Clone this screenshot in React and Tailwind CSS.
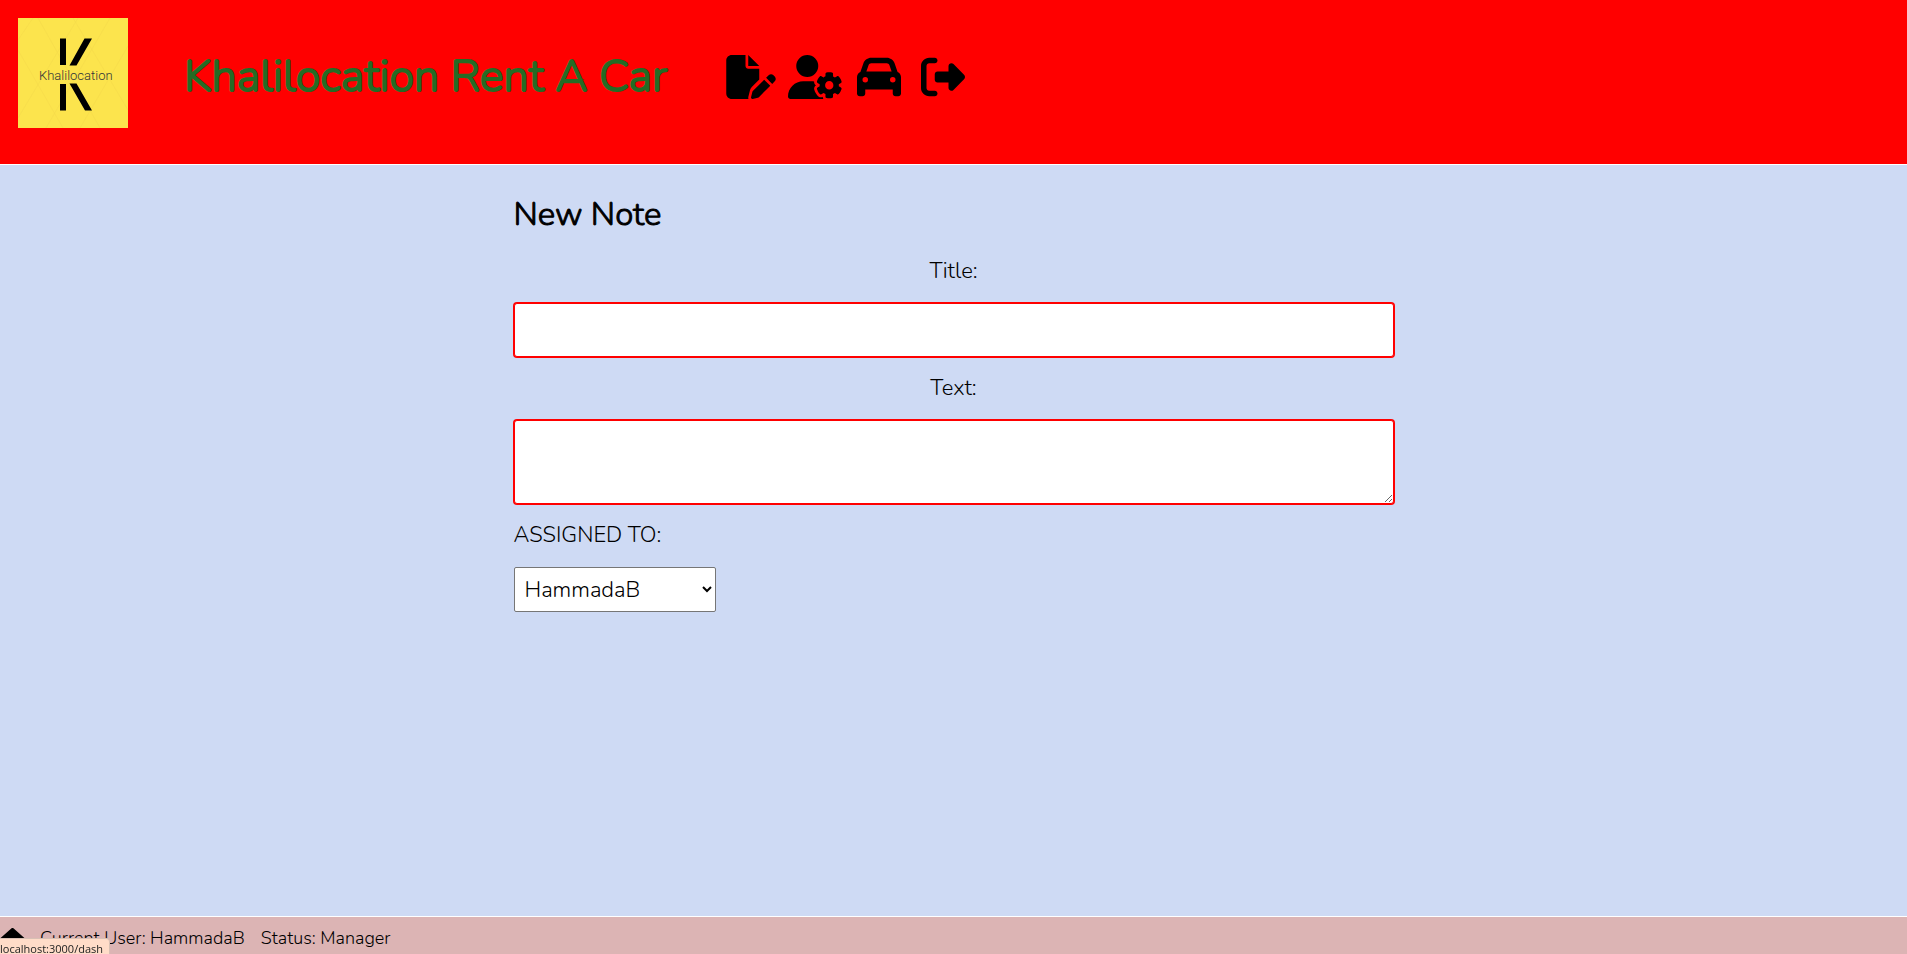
import { FaFilePen, FaUserGear, FaCar, FaRightFromBracket, FaHouse } from "react-icons/fa6";

const actions = [
  { label: "New note", Icon: FaFilePen, width: "w-[50px]" },
  { label: "User settings", Icon: FaUserGear, width: "w-[55px]" },
  { label: "Cars", Icon: FaCar, width: "w-[44px]" },
  { label: "Log out", Icon: FaRightFromBracket, width: "w-[44px]" },
];

function Logo() {
  return (
    <svg viewBox="0 0 110 110" className="size-[110px] shrink-0" role="img" aria-label="Khalilocation">
      <rect width="110" height="110" fill="#fce44d" />
      <g fill="none" stroke="#f5da4b" strokeWidth="0.6">
        <path d="M0 22 15 0M0 32 45 110M20 0 82 110M55 0 110 92M92 0 28 110M110 28 62 110M60 0 0 100" />
      </g>
      <g fill="#000">
        <path d="M42 20.500h6V47h-6zM42 66h6v26.500h-6z" />
        <path d="M66.500 20.500H74L58.500 47.500H51.500zM51.500 65.500h7L74 92.500h-7z" />
      </g>
      <text x="21" y="62" fontFamily="Roboto, sans-serif" fontSize="13" fill="#303438">
        Khalilocation
      </text>
    </svg>
  );
}

function Header() {
  return (
    <header className="flex items-start border-b border-white bg-[#ff0000] px-[18px] pt-[18px] pb-9">
      <Logo />
      <div className="flex items-center pt-[29px]">
        <h1 className="ml-14 text-[45px] leading-[60px] font-light whitespace-nowrap text-[#256b25] [-webkit-text-stroke:2px]">
          Khalilocation Rent A Car
        </h1>
        <nav className="ml-13 flex items-center">
          {actions.map(({ label, Icon, width }) => (
            <button key={label} type="button" aria-label={label} className="flex w-16 justify-center text-[44px] text-black">
              <Icon className={`${width} shrink-0`} />
            </button>
          ))}
        </nav>
      </div>
    </header>
  );
}

const field = "block w-full rounded-[3px] border border-[#ff0000] bg-white p-3 ring-1 ring-[#ff0000] outline-none";

function NoteForm() {
  return (
    <form className="mx-auto flex w-full max-w-[880px] flex-col pt-7 text-[22px] leading-[31px]">
      <h2 className="mb-5 text-[33px] leading-[43px] font-light [-webkit-text-stroke:1px]">New Note</h2>
      <label htmlFor="title" className="mb-4 text-center">Title:</label>
      <input id="title" type="text" className={`${field} h-[54px]`} />
      <label htmlFor="text" className="mt-4 mb-4 text-center">Text:</label>
      <textarea id="text" className={`${field} h-[84px]`} />
      <label htmlFor="assigned" className="mt-4 mb-4">ASSIGNED TO:</label>
      <select id="assigned" className="h-[45px] w-[202px] rounded-xs border border-[#767676] bg-white px-1.5 font-light">
        <option>HammadaB</option>
      </select>
    </form>
  );
}

export default function App() {
  return (
    <div className="flex min-h-screen flex-col bg-[#cedaf4] font-[Nunito,Lato,sans-serif] font-light text-black">
      <Header />
      <main className="flex-1">
        <NoteForm />
      </main>
      <footer className="flex h-[38px] items-center border-t border-white bg-[#dcb4b4] pt-1.5 text-[18px]">
        <a href="/dash" aria-label="Home" className="text-[22px]">
          <FaHouse className="w-[25px]" />
        </a>
        <p className="ml-[15px]">Current User: HammadaB</p>
        <p className="ml-4">Status: Manager</p>
      </footer>
      <div className="fixed bottom-0 left-0 h-4 rounded-tr border-t border-r border-[#d8c0b4] bg-[#ffdcc8] pr-1.5 font-['Open_Sans',sans-serif] text-[11px] leading-[20px] font-normal text-[#222]">
        localhost:3000/dash
      </div>
    </div>
  );
}
